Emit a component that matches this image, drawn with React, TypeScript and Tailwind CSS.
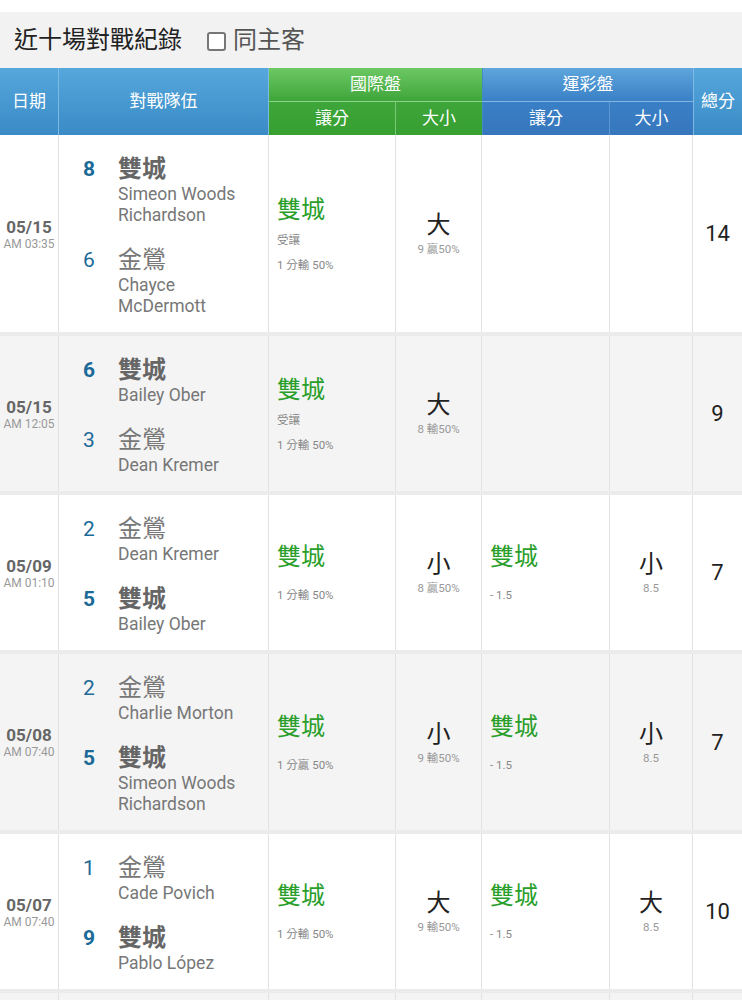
import React from "react";

interface Team {
  score: number;
  name: string;
  players: string[];
  win?: boolean;
}

interface Spread {
  team: string;
  note?: string;
  line: string;
}

interface OverUnder {
  v: string;
  sub: string;
}

interface Game {
  date: string;
  time: string;
  home: Team;
  away: Team;
  intl: Spread;
  intlOu: OverUnder;
  sport?: Spread;
  sportOu?: OverUnder;
  total: number;
}

const GAMES: Game[] = [
  {
    date: "05/15",
    time: "AM 03:35",
    home: { score: 8, name: "雙城", players: ["Simeon Woods", "Richardson"], win: true },
    away: { score: 6, name: "金鶯", players: ["Chayce", "McDermott"] },
    intl: { team: "雙城", note: "受讓", line: "1 分輸 50%" },
    intlOu: { v: "大", sub: "9 贏50%" },
    total: 14,
  },
  {
    date: "05/15",
    time: "AM 12:05",
    home: { score: 6, name: "雙城", players: ["Bailey Ober"], win: true },
    away: { score: 3, name: "金鶯", players: ["Dean Kremer"] },
    intl: { team: "雙城", note: "受讓", line: "1 分輸 50%" },
    intlOu: { v: "大", sub: "8 輸50%" },
    total: 9,
  },
  {
    date: "05/09",
    time: "AM 01:10",
    home: { score: 2, name: "金鶯", players: ["Dean Kremer"] },
    away: { score: 5, name: "雙城", players: ["Bailey Ober"], win: true },
    intl: { team: "雙城", line: "1 分輸 50%" },
    intlOu: { v: "小", sub: "8 贏50%" },
    sport: { team: "雙城", line: "- 1.5" },
    sportOu: { v: "小", sub: "8.5" },
    total: 7,
  },
  {
    date: "05/08",
    time: "AM 07:40",
    home: { score: 2, name: "金鶯", players: ["Charlie Morton"] },
    away: { score: 5, name: "雙城", players: ["Simeon Woods", "Richardson"], win: true },
    intl: { team: "雙城", line: "1 分贏 50%" },
    intlOu: { v: "小", sub: "9 輸50%" },
    sport: { team: "雙城", line: "- 1.5" },
    sportOu: { v: "小", sub: "8.5" },
    total: 7,
  },
  {
    date: "05/07",
    time: "AM 07:40",
    home: { score: 1, name: "金鶯", players: ["Cade Povich"] },
    away: { score: 9, name: "雙城", players: ["Pablo López"], win: true },
    intl: { team: "雙城", line: "1 分輸 50%" },
    intlOu: { v: "大", sub: "9 輸50%" },
    sport: { team: "雙城", line: "- 1.5" },
    sportOu: { v: "大", sub: "8.5" },
    total: 10,
  },
];

const COLS = "grid grid-cols-[59px_210px_127px_86px_128px_83px_49px]";

function TeamLine({ team, last }: { team: Team; last?: boolean }) {
  return (
    <div className={`flex ${last ? "" : "mb-[19px]"}`}>
      <span
        className={`w-[35px] shrink-0 text-[21px] leading-[30px] text-[#1c6a98] ${
          team.win ? "font-bold" : ""
        }`}
      >
        {team.score}
      </span>
      <div>
        <div
          className={`text-[24px] leading-[30px] ${
            team.win ? "font-bold text-[#666]" : "text-[#777]"
          }`}
        >
          {team.name}
        </div>
        {team.players.map((p) => (
          <div key={p} className="text-[17.5px] leading-[21px] text-[#777] whitespace-nowrap">
            {p}
          </div>
        ))}
      </div>
    </div>
  );
}

function SpreadCell({ s }: { s?: Spread }) {
  return (
    <div className="border-r border-[#e2e2e2] flex flex-col justify-center pl-[8px]">
      {s && (
        <>
          <div className="text-[24px] leading-[30px] text-[#2a9e2a]">{s.team}</div>
          {s.note && (
            <div className="text-[11.5px] leading-[16px] mt-[7px] text-[#888]">{s.note}</div>
          )}
          <div
            className={`text-[11.5px] leading-[16px] text-[#888] ${
              s.note ? "mt-[9px]" : "mt-[15px]"
            }`}
          >
            {s.line}
          </div>
        </>
      )}
    </div>
  );
}

function OuCell({ o }: { o?: OverUnder }) {
  return (
    <div className="border-r border-[#e2e2e2] flex flex-col items-center justify-center">
      {o && (
        <>
          <div className="text-[24px] leading-[28px] text-[#222]">{o.v}</div>
          <div className="text-[11.5px] leading-[14px] mt-[3px] text-[#999]">{o.sub}</div>
        </>
      )}
    </div>
  );
}

export default function App() {
  return (
    <div className="bg-white pt-[12px] font-['Roboto','Noto_Sans_CJK_TC',sans-serif]">
      {/* Title bar */}
      <div className="bg-[#f2f2f2] h-[56px] flex items-center pl-[14px]">
        <h1 className="text-[24px] text-[#222]">近十場對戰紀錄</h1>
        <label className="flex items-center ml-[25px] text-[24px] text-[#555]">
          <span className="w-[19px] h-[19px] border-2 border-[#777] rounded-[3px] mr-[7px] mt-[2px] bg-white" />
          同主客
        </label>
      </div>

      {/* Table header */}
      <div className={`${COLS} grid-rows-[34px_33px] text-white text-[17px]`}>
        <div className="row-span-2 flex items-center justify-center bg-linear-to-b from-[#55a7dc] to-[#3a8bc6] border-r border-[#7db9e2]">
          日期
        </div>
        <div className="row-span-2 flex items-center justify-center bg-linear-to-b from-[#55a7dc] to-[#3a8bc6] border-r border-[#7db9e2]">
          對戰隊伍
        </div>
        <div className="col-span-2 flex items-center justify-center bg-linear-to-b from-[#6cc864] to-[#3ea53a] border-b border-[#8fd28a]">
          國際盤
        </div>
        <div className="col-span-2 flex items-center justify-center bg-linear-to-b from-[#5ea6dc] to-[#3a80c6] border-b border-[#86b6e2] border-l border-l-[#3f8cc4]">
          運彩盤
        </div>
        <div className="row-span-2 flex items-center justify-center bg-linear-to-b from-[#55a7dc] to-[#3a8bc6] border-l border-[#7db9e2]">
          總分
        </div>
        <div className="flex items-center justify-center bg-linear-to-b from-[#3ea53a] to-[#37a031] border-r border-[#7cc677]">
          讓分
        </div>
        <div className="flex items-center justify-center bg-linear-to-b from-[#3ea53a] to-[#37a031]">
          大小
        </div>
        <div className="flex items-center justify-center bg-linear-to-b from-[#3a80c6] to-[#3676bd] border-r border-[#5d97d0] border-l border-l-[#3f8cc4]">
          讓分
        </div>
        <div className="flex items-center justify-center bg-linear-to-b from-[#3a80c6] to-[#3676bd]">
          大小
        </div>
      </div>

      {/* Rows */}
      {GAMES.map((g, i) => (
        <div
          key={i}
          className={`${COLS} border-b-4 border-[#ebebeb] ${
            i % 2 === 1 ? "bg-[#f4f4f4]" : "bg-white"
          }`}
        >
          <div className="border-r border-[#e2e2e2] flex flex-col items-center justify-center">
            <div className="text-[17px] leading-[20px] font-bold text-[#666]">{g.date}</div>
            <div className="text-[12px] leading-[14px] text-[#999]">{g.time}</div>
          </div>
          <div className="border-r border-[#e2e2e2] pl-[24px] pt-[19px] pb-[15px]">
            <TeamLine team={g.home} />
            <TeamLine team={g.away} last />
          </div>
          <SpreadCell s={g.intl} />
          <OuCell o={g.intlOu} />
          <SpreadCell s={g.sport} />
          <OuCell o={g.sportOu} />
          <div className="flex items-center justify-center text-[22px] text-[#222]">
            {g.total}
          </div>
        </div>
      ))}

      {/* next row, cut by the window */}
      <div className={`${COLS} h-[40px] bg-[#f4f4f4]`}>
        <div className="border-r border-[#e2e2e2]" />
        <div className="border-r border-[#e2e2e2]" />
        <div className="border-r border-[#e2e2e2]" />
        <div className="border-r border-[#e2e2e2]" />
        <div className="border-r border-[#e2e2e2]" />
        <div className="border-r border-[#e2e2e2]" />
        <div />
      </div>
    </div>
  );
}
